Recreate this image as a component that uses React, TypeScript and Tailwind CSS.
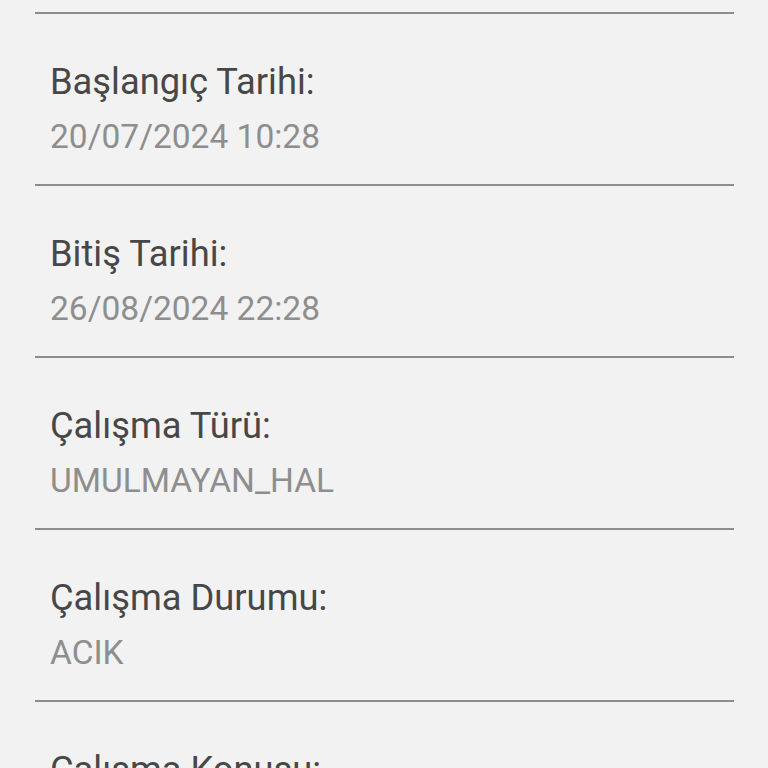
export default function App() {
  const items = [
    { label: "Başlangıç Tarihi:", value: "20/07/2024 10:28" },
    { label: "Bitiş Tarihi:", value: "26/08/2024 22:28" },
    { label: "Çalışma Türü:", value: "UMULMAYAN_HAL" },
    { label: "Çalışma Durumu:", value: "ACIK" },
    { label: "Çalışma Konusu:", value: "-" },
  ];
  return (
    <div
      className="min-h-screen w-full bg-[#f2f2f2] pt-[12px]"
      style={{ fontFamily: "Roboto, 'Noto Sans', sans-serif" }}
    >
      <div className="ml-[35px] w-[699px]">
        {items.map((it) => (
          <div key={it.label} className="border-t-2 border-[#8c8c8c] pt-[41px] pb-[20px] pl-[15px]">
            <div className="text-[36.3px] leading-[54px] text-[#474747]">{it.label}</div>
            <div className="text-[33.5px] leading-[55px] text-[#8e8e8e]">{it.value}</div>
          </div>
        ))}
      </div>
    </div>
  );
}
